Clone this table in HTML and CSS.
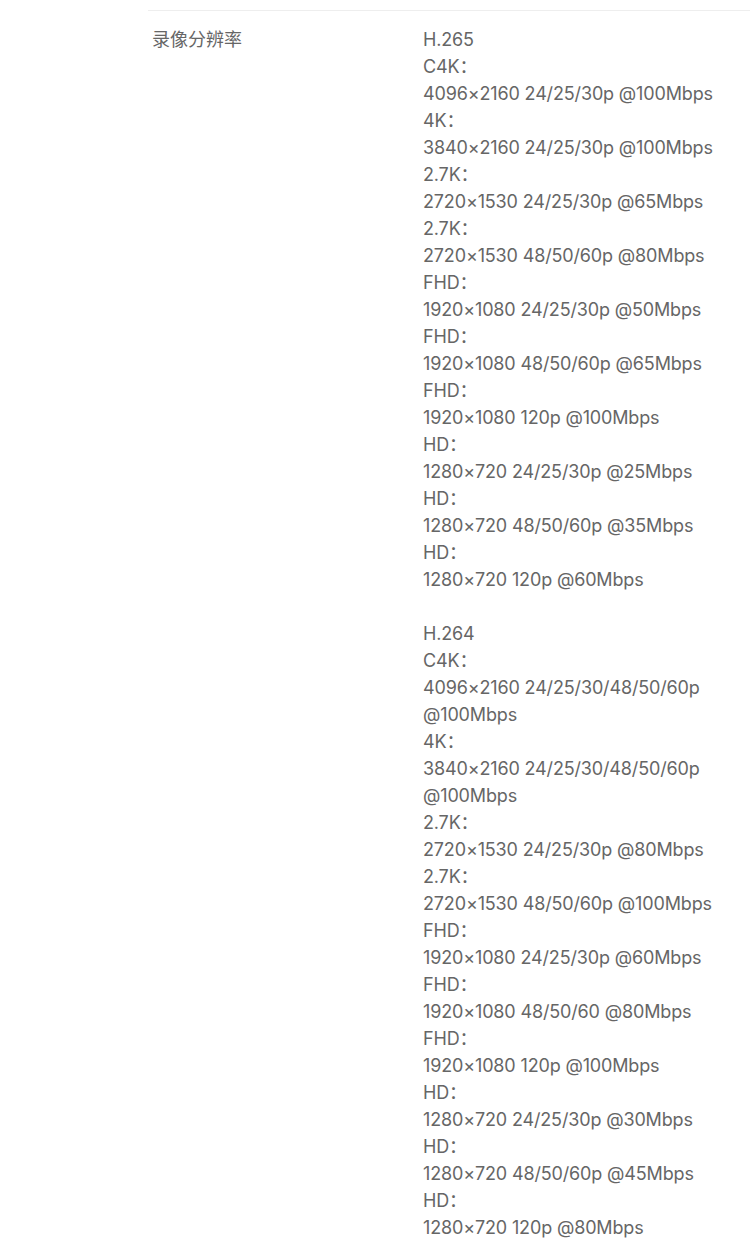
FILE: index.html
```html
<!DOCTYPE html>
<html lang="zh-CN">
<head>
    <meta charset="UTF-8">
    <meta name="viewport" content="width=device-width, initial-scale=1.0">
    <title>规格参数</title>
    <link rel="stylesheet" href="styles.css">
</head>
<body>

<div class="spec-table">
    <div class="spec-row">
        <div class="spec-name">录像分辨率</div>
        <div class="spec-value">
            H.265<br>
            C4K：<br>
            4096×2160 24/25/30p @100Mbps<br>
            4K：<br>
            3840×2160 24/25/30p @100Mbps<br>
            2.7K：<br>
            2720×1530 24/25/30p @65Mbps<br>
            2.7K：<br>
            2720×1530 48/50/60p @80Mbps<br>
            FHD：<br>
            1920×1080 24/25/30p @50Mbps<br>
            FHD：<br>
            1920×1080 48/50/60p @65Mbps<br>
            FHD：<br>
            1920×1080 120p @100Mbps<br>
            HD：<br>
            1280×720 24/25/30p @25Mbps<br>
            HD：<br>
            1280×720 48/50/60p @35Mbps<br>
            HD：<br>
            1280×720 120p @60Mbps<br>
            <br>
            H.264<br>
            C4K：<br>
            4096×2160 24/25/30/48/50/60p @100Mbps<br>
            4K：<br>
            3840×2160 24/25/30/48/50/60p @100Mbps<br>
            2.7K：<br>
            2720×1530 24/25/30p @80Mbps<br>
            2.7K：<br>
            2720×1530 48/50/60p @100Mbps<br>
            FHD：<br>
            1920×1080 24/25/30p @60Mbps<br>
            FHD：<br>
            1920×1080 48/50/60 @80Mbps<br>
            FHD：<br>
            1920×1080 120p @100Mbps<br>
            HD：<br>
            1280×720 24/25/30p @30Mbps<br>
            HD：<br>
            1280×720 48/50/60p @45Mbps<br>
            HD：<br>
            1280×720 120p @80Mbps
        </div>
    </div>
</div>

</body>
</html>
```

FILE: styles.css
```css
body {
    margin: 0;
    background: #fff;
    font-family: Inter, "Noto Sans CJK SC", sans-serif;
    color: #666;
}
.spec-table {
    margin-left: 148px;
    padding-top: 10px;
}
.spec-row {
    display: flex;
    border-top: 1px solid #eee;
    padding: 15px 0 0 4px;
    font-size: 18px;
    line-height: 27px;
}
.spec-name {
    width: 271px;
    flex-shrink: 0;
}
.spec-value {
    width: 310px;
    letter-spacing: -0.15px;
}
```
